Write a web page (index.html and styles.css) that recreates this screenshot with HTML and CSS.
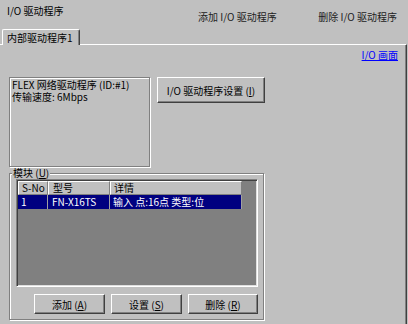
FILE: index.html
```html
<!DOCTYPE html>
<html lang="zh-CN">
<head>
    <meta charset="UTF-8">
    <title>I/O 驱动程序</title>
    <link rel="stylesheet" href="styles.css">
</head>
<body>
    <div class="topbar">
        <span class="title">I/O 驱动程序</span>
        <span class="action">添加 I/O 驱动程序</span>
        <span class="action action-del">删除 I/O 驱动程序</span>
    </div>

    <div class="tabs">
        <div class="tab">内部驱动程序1</div>
    </div>

    <div class="panel">
        <div class="link-row"><a href="#">I/O 画面</a></div>

        <div class="driver-row">
            <div class="info-box">
                <p>FLEX 网络驱动程序 (ID:#1)</p>
                <p>传输速度: 6Mbps</p>
            </div>
            <button class="btn btn-settings">I/O 驱动程序设置 (<u>I</u>)</button>
        </div>

        <fieldset class="modules">
            <legend>模块 (<u>U</u>)</legend>
            <div class="list">
                <div class="list-row list-head">
                    <span class="cell c-no">S-No</span>
                    <span class="cell c-model">型号</span>
                    <span class="cell c-detail">详情</span>
                </div>
                <div class="list-row selected">
                    <span class="cell c-no">1</span>
                    <span class="cell c-model">FN-X16TS</span>
                    <span class="cell c-detail">输入 点:16点 类型:位</span>
                </div>
            </div>
            <div class="btn-row">
                <button class="btn btn-small">添加 (<u>A</u>)</button>
                <button class="btn btn-small">设置 (<u>S</u>)</button>
                <button class="btn btn-small btn-last">删除 (<u>R</u>)</button>
            </div>
        </fieldset>
    </div>
</body>
</html>
```

FILE: styles.css
```css
body {
    margin: 0;
    width: 408px;
    height: 324px;
    overflow: hidden;
    background-color: #c0c0c0;
    color: #000;
    font-family: "Noto Sans CJK SC", "Liberation Sans", sans-serif;
    font-size: 10px;
    line-height: 12px;
}

p {
    margin: 0;
}

/* top title bar */
.topbar {
    display: flex;
    height: 29px;
    padding: 0 11px 0 7px;
}

.title {
    width: 191px;
    padding-top: 5px;
}

.action {
    padding-top: 11px;
    color: #222;
}

.action-del {
    margin-left: auto;
}

/* tabs */
.tabs {
    display: flex;
    height: 16px;
    padding-left: 2px;
}

.tab {
    position: relative;
    z-index: 1;
    box-sizing: border-box;
    height: 16px;
    padding: 2px 6px 0 4px;
    background-color: #c0c0c0;
    border-top: 1px solid #fff;
    border-left: 1px solid #fff;
    border-right: 1px solid #404040;
    box-shadow: inset -1px 0 0 #808080;
    border-radius: 2px 2px 0 0;
}

.panel {
    margin-top: -1px;
    width: 407px;
    height: 280px;
    box-sizing: border-box;
    padding: 0 8px 0 9px;
    border-top: 1px solid #fff;
    border-right: 1px solid #404040;
    box-shadow: inset -1px 0 0 #808080;
}

.link-row {
    display: flex;
    justify-content: flex-end;
    margin-top: 4px;
    height: 12px;
}

.link-row a {
    color: #0000ff;
}

/* driver info */
.driver-row {
    display: flex;
    align-items: flex-start;
    margin-top: 16px;
}

.info-box {
    width: 141px;
    height: 90px;
    box-sizing: border-box;
    padding: 1px 2px;
    border: 1px solid #808080;
    box-shadow: inset 1px 1px 0 #fff, 1px 1px 0 #fff;
}

.btn {
    background-color: #c0c0c0;
    font-family: inherit;
    font-size: 10px;
    color: #000;
    padding: 0;
    border-top: 1px solid #fff;
    border-left: 1px solid #fff;
    border-right: 1px solid #404040;
    border-bottom: 1px solid #404040;
    box-shadow: inset -1px -1px 0 #808080;
    border-radius: 0;
}

.btn-settings {
    margin-left: 7px;
    width: 108px;
    height: 26px;
}

/* modules group */
.modules {
    margin: 0;
    width: 255px;
    box-sizing: border-box;
    padding: 0 4px 5px 6px;
    border: 1px solid #808080;
    box-shadow: inset 1px 1px 0 #fff, 1px 1px 0 #fff;
}

.modules legend {
    margin-left: -4px;
    padding: 0 1px;
    background-color: #c0c0c0;
}

.list {
    width: 242px;
    height: 108px;
    box-sizing: border-box;
    padding: 1px;
    background-color: #808080;
    border-top: 1px solid #808080;
    border-left: 1px solid #808080;
    border-right: 1px solid #fff;
    border-bottom: 1px solid #fff;
    box-shadow: inset 1px 1px 0 #404040, inset -1px -1px 0 #dfdfdf;
}

.list-row {
    display: flex;
    height: 14px;
    width: 224px;
}

.cell {
    box-sizing: border-box;
    padding-left: 3px;
    line-height: 14px;
    white-space: nowrap;
}

.c-no {
    width: 30px;
}

.c-model {
    width: 62px;
    padding-left: 4px;
}

.c-detail {
    width: 132px;
}

.list-head .cell {
    background-color: #c0c0c0;
    border-top: 1px solid #fff;
    border-left: 1px solid #fff;
    border-right: 1px solid #808080;
    border-bottom: 1px solid #808080;
    line-height: 12px;
}

.selected {
    background-color: #000080;
    color: #fff;
}

.selected .cell {
    border-right: 1px solid #a0a0a0;
}

.btn-row {
    display: flex;
    justify-content: flex-end;
    gap: 6px;
    margin-top: 7px;
    width: 242px;
}

.btn-small {
    width: 71px;
    height: 20px;
}

.btn-last {
    width: 70px;
}
```
